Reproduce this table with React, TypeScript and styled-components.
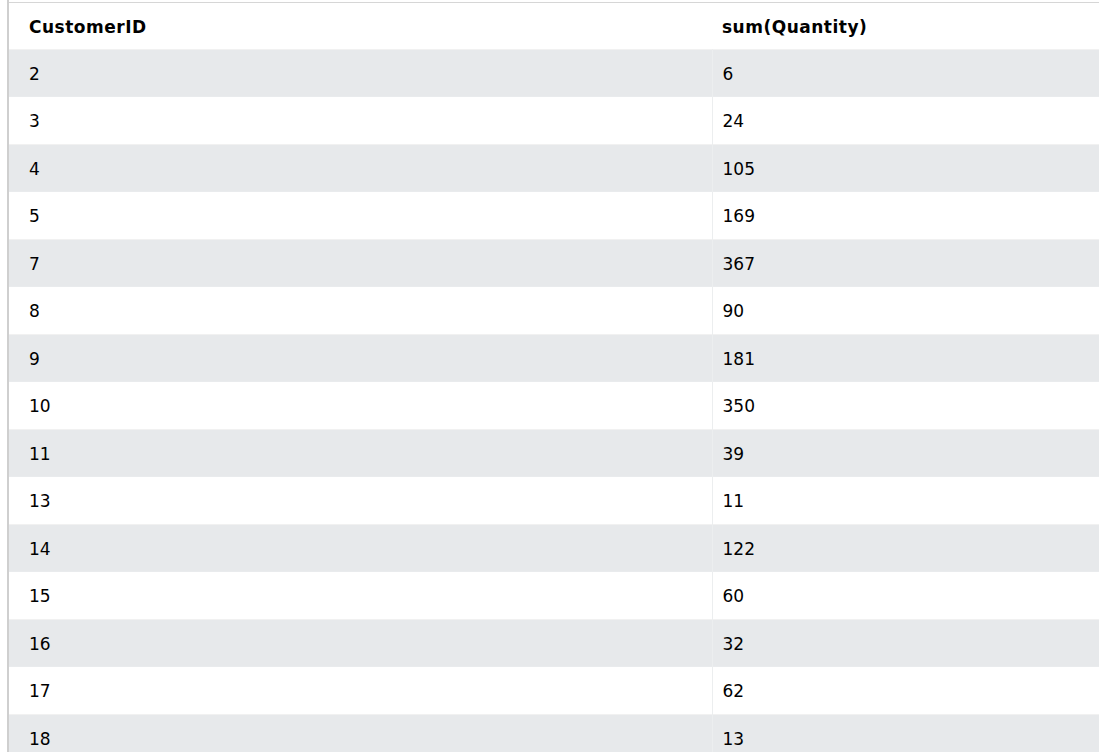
import React from "react";
import styled, { createGlobalStyle } from "styled-components";

const Global = createGlobalStyle`
  html, body { margin: 0; padding: 0; background: #fff; overflow: hidden; }
  body { font-family: Verdana, "DejaVu Sans", sans-serif; font-size: 17px; line-height: 22.5px; color: #000; }
`;

const Frame = styled.div`
  margin-left: 7px;
  border-left: 2px solid #cfcfcf;
  padding-top: 2px;
  height: 100vh;
  overflow: hidden;
`;

const Table = styled.table`
  border-collapse: collapse;
  table-layout: fixed;
  width: 1200px;
  border-top: 1px solid #d6d6d6;
`;

const Row = styled.tr<{ $shade?: boolean }>`
  background: ${(p) => (p.$shade ? "#e7e9eb" : "#ffffff")};
  border-bottom: 1px solid ${(p) => (p.$shade ? "#e9ebed" : "#f1f1f1")};
`;

const HeadCell = styled.th<{ $first?: boolean }>`
  box-sizing: border-box;
  text-align: left;
  font-weight: bold;
  letter-spacing: 0.5px;
  padding: 13px 10px 10px ${(p) => (p.$first ? "20px" : "10px")};
  width: ${(p) => (p.$first ? "703px" : "auto")};
`;

const Cell = styled.td<{ $first?: boolean }>`
  padding: 13px 10px 11px ${(p) => (p.$first ? "20px" : "10px")};
  border-left: ${(p) => (p.$first ? "none" : "1px solid #eceeef")};
`;

const rows: [number, number][] = [
  [2, 6], [3, 24], [4, 105], [5, 169], [7, 367], [8, 90], [9, 181], [10, 350],
  [11, 39], [13, 11], [14, 122], [15, 60], [16, 32], [17, 62], [18, 13], [19, 71],
];

export default function App() {
  return (
    <>
      <Global />
      <Frame>
        <Table>
          <thead>
            <Row>
              <HeadCell $first>CustomerID</HeadCell>
              <HeadCell>sum(Quantity)</HeadCell>
            </Row>
          </thead>
          <tbody>
            {rows.map(([id, q], i) => (
              <Row key={id} $shade={i % 2 === 0}>
                <Cell $first>{id}</Cell>
                <Cell>{q}</Cell>
              </Row>
            ))}
          </tbody>
        </Table>
      </Frame>
    </>
  );
}
